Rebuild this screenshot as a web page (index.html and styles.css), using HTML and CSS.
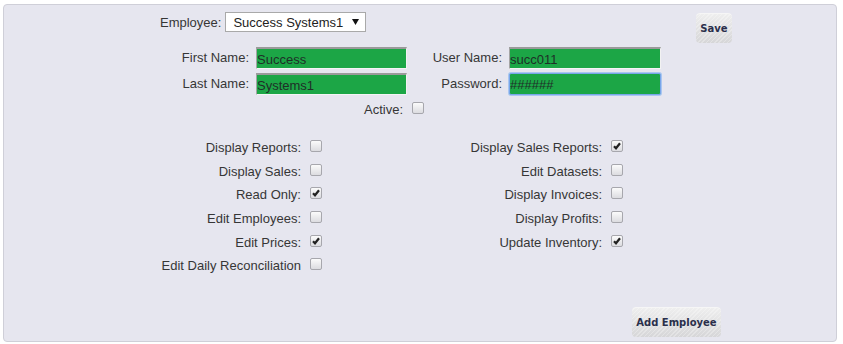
FILE: index.html
```html
<!DOCTYPE html>
<html>
<head>
<meta charset="utf-8">
<link rel="stylesheet" href="styles.css">
</head>
<body>
<div class="panel">
  <div class="top">
    <div class="form-left">
      <div class="emp-row">
        <label class="lbl">Employee:</label>
        <div class="select-wrap">
          <select class="sel"><option>Success Systems1</option></select>
          <svg class="arrow" width="7" height="6" viewBox="0 0 7 6"><path d="M0 0H7L3.5 6Z" fill="#111"/></svg>
        </div>
      </div>
      <div class="names">
        <label class="lbl nl">First Name:</label>
        <input class="txt" type="text" value="Success">
        <label class="lbl nl">User Name:</label>
        <input class="txt" type="text" value="succ011">
        <label class="lbl nl">Last Name:</label>
        <input class="txt" type="text" value="Systems1">
        <label class="lbl nl">Password:</label>
        <input class="txt focus" type="text" value="######">
      </div>
      <div class="active-row">
        <span class="lbl">Active:</span>
        <span class="cb"></span>
      </div>
    </div>
    <button class="btn save">Save</button>
  </div>
  <div class="perms">
    <div class="cell"><span class="lbl">Display Reports:</span><span class="cb"></span></div>
    <div class="cell"><span class="lbl">Display Sales Reports:</span><span class="cb on"><svg viewBox="0 0 12 12" width="12" height="12"><path d="M3 6.2L5 8.3L9 3.2" fill="none" stroke="#222" stroke-width="2.2"/></svg></span></div>
    <div class="cell"><span class="lbl">Display Sales:</span><span class="cb"></span></div>
    <div class="cell"><span class="lbl">Edit Datasets:</span><span class="cb"></span></div>
    <div class="cell"><span class="lbl">Read Only:</span><span class="cb on"><svg viewBox="0 0 12 12" width="12" height="12"><path d="M3 6.2L5 8.3L9 3.2" fill="none" stroke="#222" stroke-width="2.2"/></svg></span></div>
    <div class="cell"><span class="lbl">Display Invoices:</span><span class="cb"></span></div>
    <div class="cell"><span class="lbl">Edit Employees:</span><span class="cb"></span></div>
    <div class="cell"><span class="lbl">Display Profits:</span><span class="cb"></span></div>
    <div class="cell"><span class="lbl">Edit Prices:</span><span class="cb on"><svg viewBox="0 0 12 12" width="12" height="12"><path d="M3 6.2L5 8.3L9 3.2" fill="none" stroke="#222" stroke-width="2.2"/></svg></span></div>
    <div class="cell"><span class="lbl">Update Inventory:</span><span class="cb on"><svg viewBox="0 0 12 12" width="12" height="12"><path d="M3 6.2L5 8.3L9 3.2" fill="none" stroke="#222" stroke-width="2.2"/></svg></span></div>
    <div class="cell"><span class="lbl">Edit Daily Reconciliation</span><span class="cb"></span></div>
  </div>
  <div class="bottom">
    <button class="btn add">Add Employee</button>
  </div>
</div>
</body>
</html>
```

FILE: styles.css
```css
html, body {
  margin: 0;
  background: #ffffff;
}
body {
  padding: 4px 6px 2px 3px;
  font-family: "Liberation Sans", Arial, sans-serif;
  font-size: 13px;
  color: #333333;
}
.panel {
  box-sizing: border-box;
  width: 834px;
  height: 338px;
  background: #e6e6ef;
  border: 1px solid #cfcfd8;
  border-radius: 4px;
  padding: 7px 0 0 156px;
  display: flex;
  flex-direction: column;
}
.top {
  display: flex;
  align-items: flex-start;
}
.form-left {
  display: flex;
  flex-direction: column;
}
.lbl {
  color: #363636;
  white-space: nowrap;
}
.emp-row {
  display: flex;
  align-items: center;
  height: 20px;
  gap: 4px;
}
.select-wrap {
  position: relative;
  width: 141px;
  height: 20px;
}
.sel {
  appearance: none;
  -webkit-appearance: none;
  box-sizing: border-box;
  width: 141px;
  height: 20px;
  margin: 0;
  padding: 0 0 0 7px;
  border: 1px solid #a9a9a9;
  border-radius: 0;
  background: #ffffff;
  font-family: "Liberation Sans", Arial, sans-serif;
  font-size: 13px;
  color: #222222;
}
.arrow {
  position: absolute;
  right: 7px;
  top: 7px;
}
.names {
  display: grid;
  grid-template-columns: 96px 151px 102px 152px;
  grid-auto-rows: 22px;
  row-gap: 4px;
  margin-top: 15px;
  align-items: center;
}
.nl {
  text-align: right;
  padding-right: 7px;
  margin-top: -2px;
}
.txt {
  box-sizing: border-box;
  width: 100%;
  height: 22px;
  margin: 0;
  padding: 2px 0 0 0;
  background: #1ca646;
  border-style: solid;
  border-width: 2px 1px 1px 1px;
  border-color: #9a9a9a #f2f2f2 #f4f4f4 #a4a4a4;
  font-family: "Liberation Sans", Arial, sans-serif;
  font-size: 13px;
  color: #1f2f28;
  outline: none;
}
.txt.focus {
  border: 1px solid #79a6ea;
  border-radius: 2px;
  box-shadow: 0 0 0 1px #a9c6f0;
  padding-top: 1px;
}
.active-row {
  display: flex;
  justify-content: flex-end;
  align-items: center;
  gap: 9px;
  width: 264px;
  height: 20px;
  margin-top: 4px;
}
.cb {
  box-sizing: border-box;
  display: inline-block;
  flex: none;
  width: 12px;
  height: 12px;
  border: 1px solid #a7a7ad;
  border-radius: 2px;
  background: linear-gradient(#fbfbfb, #dcdce0);
  position: relative;
}
.cb svg {
  position: absolute;
  left: -1px;
  top: -1px;
}
.active-row .cb {
  margin-top: -3px;
}
.save {
  margin-left: 35px;
  margin-top: 1px;
  width: 36px;
  height: 30px;
}
.btn {
  box-sizing: border-box;
  border: none;
  border-radius: 4px;
  padding: 0;
  background:
    repeating-linear-gradient(-45deg, rgba(255,255,255,0.28) 0 1px, rgba(0,0,0,0) 1px 3px),
    linear-gradient(#efefef, #d6d6d8);
  box-shadow: inset 0 1px 0 #f6f6f6;
  font-family: "DejaVu Sans", Verdana, sans-serif;
  font-weight: bold;
  font-size: 10px;
  color: #2a2f4b;
  cursor: pointer;
}
.perms {
  display: grid;
  grid-template-columns: 162px 301px;
  grid-auto-rows: 23.6px;
  margin-top: 17px;
}
.cell {
  display: flex;
  justify-content: flex-end;
  align-items: center;
  gap: 9px;
}
.cell .cb {
  margin-top: -3px;
}
.bottom {
  display: flex;
  margin-top: 29.7px;
}
.add {
  margin-left: 472px;
  width: 89px;
  height: 30px;
}
```
